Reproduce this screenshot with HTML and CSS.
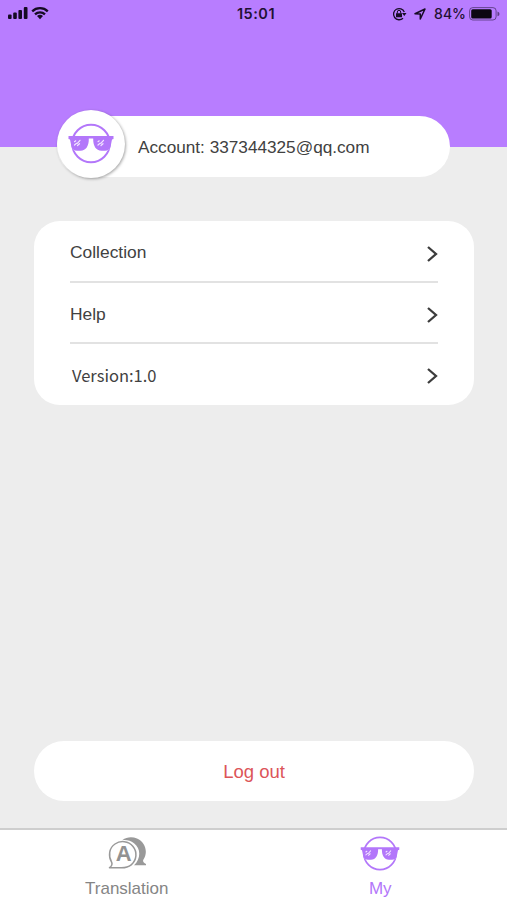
FILE: index.html
```html
<!DOCTYPE html>
<html lang="en">
<head>
<meta charset="utf-8">
<title>My</title>
<link rel="stylesheet" href="styles.css">
</head>
<body>
<svg class="defs" width="0" height="0">
  <symbol id="shades" viewBox="0 0 46 42">
    <circle cx="23" cy="20.500" r="18.800" fill="none" stroke="currentColor" stroke-width="2"/>
    <path fill="#fff" d="M2 15h42l-3 11-4 4h-5l-9-10-9 10H9l-4-4z"/>
    <path fill="currentColor" d="M.5 13h45v3l-1.500.6-1.300 6.400c-.7 3.200-2.500 4.800-5.700 4.800h-3.500c-5.500 0-8.500-4.800-8.300-12.200h-4.400C21 23 18 27.800 12.500 27.800H9C5.800 27.800 4 26.200 3.300 23L2 16.600l-1.500-.6z"/>
    <path fill="none" stroke="#f3e6ff" stroke-width="1.200" stroke-linecap="round" d="M6.500 22l2-1.700 1-.2 2.500-2.800M9.500 22.500l2-1.800M6.500 18.700l1.200-.9M30 22l2-1.700 1-.2 2.500-2.800M33 22.500l2-1.800M30 18.700l1.200-.9"/>
  </symbol>
  <symbol id="chevron" viewBox="0 0 12 18">
    <path fill="none" stroke="#3c3c3c" stroke-width="2.300" d="M2 2l8 7-8 7"/>
  </symbol>
</svg>
<div class="screen">
  <header class="status">
    <div class="status-left">
      <svg width="42" height="16" viewBox="0 0 42 16"><g fill="#160b24"><rect x="0" y="9.500" width="3.600" height="4.500" rx="1"/><rect x="5.200" y="7.500" width="3.600" height="6.500" rx="1"/><rect x="10.400" y="5" width="3.600" height="9" rx="1"/><rect x="15.800" y="2" width="3.700" height="12" rx="1"/><path d="M32 14.200l-3-3.200a4.500 4.500 0 0 1 6 0z"/></g><path fill="none" stroke="#160b24" stroke-width="2.300" d="M24.200 6.300a11.200 11.200 0 0 1 15.600 0M27 9.400a7.200 7.200 0 0 1 10 0"/></svg>
    </div>
    <time class="clock">15:01</time>
    <div class="status-right">
      <svg width="15" height="14" viewBox="0 0 15 14"><path fill="none" stroke="#160b24" stroke-width="1.300" d="M12.300 5A5.600 5.600 0 1 0 11 11.200"/><path fill="#160b24" d="M10 6h4.500l-2.200 3zM4 6.200h6v4H4z"/><path fill="none" stroke="#160b24" d="M5.300 6.500V5a1.700 1.700 0 0 1 3.400 0v1.500"/></svg>
      <svg class="arrow" width="12" height="12" viewBox="0 0 12 12"><path fill="none" stroke="#160b24" stroke-width="1.500" stroke-linejoin="round" d="M1 5.800L11 1 6.300 11V5.900z"/></svg>
      <span class="percent">84%</span>
      <svg width="31" height="14" viewBox="0 0 31 14"><rect x=".6" y=".6" width="26.500" height="12.400" rx="3.200" fill="none" stroke="#160b24" stroke-opacity=".5" stroke-width="1"/><rect x="2.200" y="2.200" width="20.500" height="9.300" rx="1.500" fill="#0b0611"/><path fill="#160b24" fill-opacity=".55" d="M28.500 4.500q2 .6 2 2.400t-2 2.400z"/></svg>
    </div>
  </header>
  <main class="content">
    <section class="account">
      <div class="avatar"><svg width="46" height="42"><use href="#shades"/></svg></div>
      <span class="account-name">Account: 337344325@qq.com</span>
    </section>
    <nav class="menu">
      <a class="row"><span>Collection</span><svg width="12" height="18"><use href="#chevron"/></svg></a>
      <a class="row"><span>Help</span><svg width="12" height="18"><use href="#chevron"/></svg></a>
      <a class="row"><span class="version">Version:1.0</span><svg width="12" height="18"><use href="#chevron"/></svg></a>
    </nav>
    <button class="logout">Log out</button>
  </main>
  <footer class="tabs">
    <a class="tab">
      <svg width="40" height="34" viewBox="0 0 40 34"><path fill="#999" d="M15.500 4C19.500 1 25 .4 30 2.500c8.500 3.700 11.500 14 6.200 21.500-.4 1.700.6 3 2.800 4v1.200H27c7-6 7-17 0-22Q22 3.300 15.500 4z"/><path fill="#fff" stroke="#999" stroke-width="1.500" stroke-linejoin="round" d="M2.500 31.700c2.200-1.500 3-3.300 2.200-5.300C1 20 2 12 8 8c5.500-3.800 13.500-3 17.800 2.200 4.800 5.700 4 14-1.600 18.600-3 2.400-6.500 2.900-9.700 2.900z"/></svg>
      <span class="glyph">A</span>
      <span class="label">Translation</span>
    </a>
    <a class="tab active">
      <svg width="40" height="36"><use href="#shades"/></svg>
      <span class="label">My</span>
    </a>
  </footer>
</div>
</body>
</html>
```
FILE: styles.css
```css
* { box-sizing: border-box; }
body {
  margin: 0;
  font-family: "Liberation Sans", Arial, sans-serif;
  font-size: 17.4px;
  color: #414141;
}
svg { display: block; flex: none; }
.defs { position: absolute; }
.screen {
  width: 507px;
  height: 900px;
  display: flex;
  flex-direction: column;
  background: linear-gradient(#b87dff 147.5px, #ededed 147.5px);
  overflow: hidden;
}
.status {
  height: 28px;
  padding: 0 7px 0 8px;
  display: grid;
  grid-template-columns: 1fr auto 1fr;
  align-items: center;
  color: #211033;
}
.status-left { padding-bottom: 3px; }
.clock {
  font: 600 14.500px/28px Inter, sans-serif;
  letter-spacing: .5px;
  padding-left: 4px;
}
.status-right {
  display: flex;
  justify-content: flex-end;
  align-items: center;
  padding-bottom: 1px;
}
.arrow { margin: 0 8px 0 7px; }
.percent {
  font: 500 14px/26px Inter, sans-serif;
  margin-right: 3px;
}
.content {
  flex: 1;
  display: flex;
  flex-direction: column;
  padding: 88px 33px 27px 34px;
}
.account {
  width: 393px;
  height: 61px;
  margin-left: 23px;
  display: flex;
  align-items: center;
  background: #fff;
  border-radius: 31px;
}
.avatar {
  width: 68px;
  height: 68px;
  margin-top: -6px;
  display: grid;
  place-items: center;
  border-radius: 50%;
  background: #fff;
  color: #b377fa;
  box-shadow: 1px 1px 3px rgba(0,0,0,.35);
  flex: none;
}
.account-name { margin-left: 13px; padding-top: 1px; font-size: 17.200px; }
.menu {
  height: 184px;
  margin-top: 44px;
  padding: 0 36px;
  border-radius: 26px;
  background: #fff;
}
.row {
  height: 61px;
  display: flex;
  align-items: center;
  justify-content: space-between;
  border-bottom: 2px solid #e2e2e2;
}
.row:first-child { height: 62px; }
.row:last-child { border-bottom: 0; }
.row span { padding-top: 2px; }
.row:nth-child(2) span { padding-top: 4px; }
.row svg { margin-top: 5px; }
.row:last-child svg { margin-top: 3px; }
.row .version {
  font-family: "Noto Sans CJK SC", sans-serif;
  font-size: 16.500px;
  margin-left: 2px;
  padding-top: 0;
}
.logout {
  height: 60px;
  margin-top: auto;
  padding: 2px 0 0;
  border: 0;
  border-radius: 30px;
  background: #fff;
  color: #dc5559;
  font: 18.500px "Liberation Sans", Arial, sans-serif;
}
.tabs {
  height: 72px;
  display: grid;
  grid-template-columns: 1fr 1fr;
  background: #fff;
  border-top: 2px solid #cecece;
}
.tab {
  position: relative;
  display: flex;
  flex-direction: column;
  align-items: center;
  justify-content: space-between;
  padding: 6px 0 1px;
  color: #858585;
}
.glyph {
  position: absolute;
  left: 50%;
  top: 11px;
  margin-left: -11px;
  font: bold 22px/26px "Liberation Sans", sans-serif;
  color: #929292;
}
.label { font-size: 17px; line-height: 20px; }
.active { color: #b377fa; }
```
